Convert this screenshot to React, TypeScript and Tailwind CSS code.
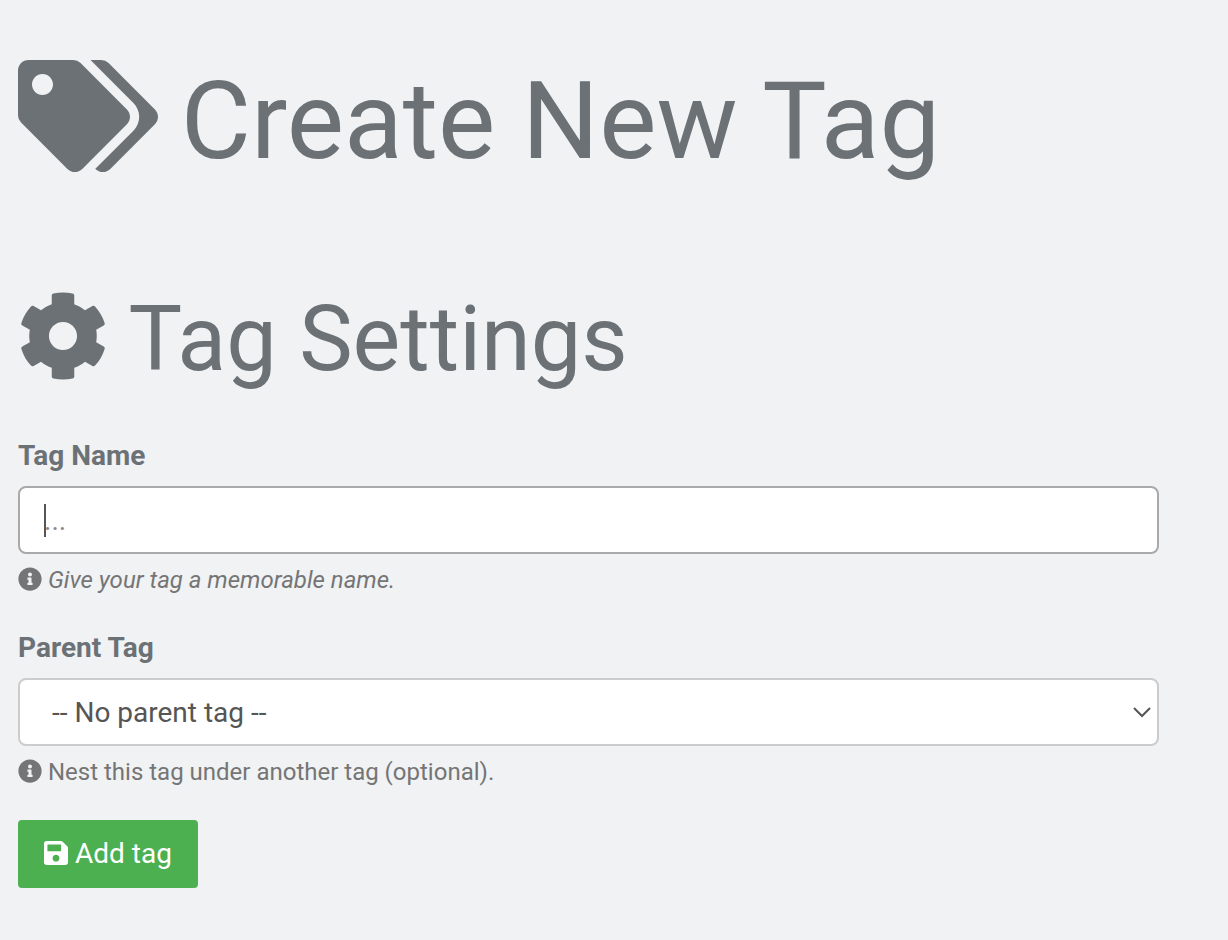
import { FaTags, FaCog, FaInfoCircle, FaSave } from "react-icons/fa";

export default function App() {
  return (
    <main className="min-h-screen bg-[#f0f2f4] pl-[18px] pr-[69px] font-[Roboto,sans-serif] text-[#6c7176]">
      <h1 className="pt-[57px] text-[108px] leading-[128px]">
        <FaTags className="-mr-1 inline h-[112px] w-[140px] align-[-14px]" aria-hidden="true" />{" "}
        Create New Tag
      </h1>
      <form onSubmit={(e) => e.preventDefault()}>
        <h2 className="pt-[103px] text-[90px] leading-[104px]">
          <FaCog className="inline size-[90px] align-[-11px]" aria-hidden="true" />{" "}
          Tag Settings
        </h2>
        <label htmlFor="name" className="mt-[44px] block text-[28px] font-bold leading-[40px]">Tag Name</label>
        <div className="relative mt-2.5">
          <input
            id="name"
            placeholder="..."
            className="peer block h-[68px] w-full rounded-lg border-2 border-[#a9a9a9] bg-white px-6 text-[28px] text-[#555] caret-transparent outline-none placeholder:text-[#888]"
          />
          <span className="pointer-events-none absolute left-[26px] top-[18px] hidden h-[33px] w-0.5 bg-[#555] peer-placeholder-shown:block" aria-hidden="true" />
        </div>
        <p className="mt-2 text-[24px] italic leading-[36px] text-[#757575]">
          <FaInfoCircle className="inline size-6 align-[-3px]" aria-hidden="true" />{" "}
          Give your tag a memorable name.
        </p>
        <label htmlFor="parent" className="mt-[30px] block text-[28px] font-bold leading-[40px]">Parent Tag</label>
        <div className="relative mt-2.5">
          <select
            id="parent"
            className="block h-[68px] w-full appearance-none rounded-lg border-2 border-[#cccccc] bg-white px-8 pt-0.5 text-[28px] text-[#555]"
          >
            <option>-- No parent tag --</option>
          </select>
          <svg viewBox="0 0 18 12" className="pointer-events-none absolute right-2 top-7 h-3 w-[18px]" fill="none" stroke="#555" strokeWidth="2" aria-hidden="true">
            <path d="M1 2l8 8 8-8" />
          </svg>
        </div>
        <p className="mt-2 text-[24px] leading-[36px] text-[#757575]">
          <FaInfoCircle className="inline size-6 align-[-3px]" aria-hidden="true" />{" "}
          Nest this tag under another tag (optional).
        </p>
        <button className="mt-[30px] block h-[68px] rounded-[4px] bg-[#4caf50] px-[26px] text-[28px] text-white">
          <FaSave className="inline h-7 w-6 align-[-4px]" aria-hidden="true" />{" "}
          Add tag
        </button>
      </form>
    </main>
  );
}
